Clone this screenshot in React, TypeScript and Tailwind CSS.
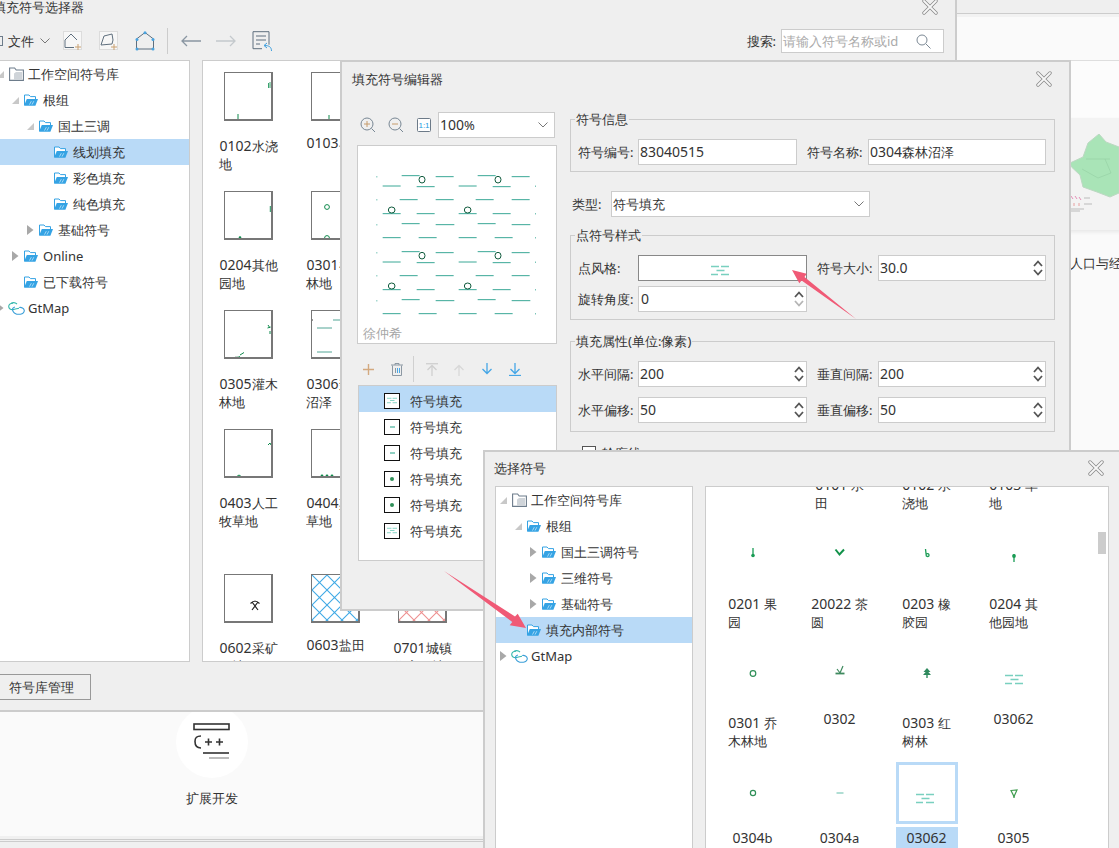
import React from "react";

const SEL = "bg-[#b9daf7]";

function T({ t }: { t: string }) {
  return (
    <>
      {t.split(/(\d+)/).map((p, i) =>
        /^\d+$/.test(p) ? (
          <span key={i} className="text-[14px]">{p}</span>
        ) : (
          <React.Fragment key={i}>{p}</React.Fragment>
        )
      )}
    </>
  );
}

function Tri({ open }: { open?: boolean }) {
  return open ? (
    <svg width="7" height="7" viewBox="0 0 7 7"><path d="M7 0v7H0z" fill="#c8c8c8" /></svg>
  ) : (
    <svg width="7" height="10" viewBox="0 0 7 10"><path d="M0 0l6.5 5L0 10z" fill="#a8a8a8" /></svg>
  );
}

function FolderIcon() {
  return (
    <svg width="14" height="12" viewBox="0 0 14 12" fill="none">
      <path d="M.5 11V1h4.5l1.5 1.6h5v2.4" fill="#fff" stroke="#35a3e4" />
      <path d="M0 11.8 2.8 5H14l-2.6 6.8z" fill="#35a3e4" />
      <path d="M5.5 10.6l1.8-3.4M8 10.6l1.8-3.4" stroke="#a3d8f6" strokeWidth="1" />
    </svg>
  );
}

function LibIcon() {
  return (
    <svg width="15" height="14" viewBox="0 0 15 14" fill="none">
      <path d="M.6 13.4V1h5l1.6 2h7.2v10.4z" fill="#fff" stroke="#6d7c8b" strokeWidth="1.1" />
      <path d="M5 13V6.6l2-1.6h6v8z" fill="#cfd4d9" />
    </svg>
  );
}

function GtIcon() {
  return (
    <svg width="17" height="13" viewBox="0 0 17 13" fill="none">
      <path d="M5 1.2C2.4 1 .6 2.6.7 4.6c.1 2 2 3.2 4.3 3 2.4-.2 4.4-1.2 6-1.3" stroke="#35b8ac" strokeWidth="1.1" />
      <path d="M7 5C4.6 5.4 4 7.400 5 9.200c1.200 2.400 4.300 3.400 7.400 3 2.400-.4 4.200-2 3.800-4-.4-2-2.600-3.200-5-2.700" stroke="#3b9fd8" strokeWidth="1.1" />
      <path d="M3.200 1.300C5 .4 7.400.6 9 2" stroke="#35b8ac" strokeWidth="1.100" />
    </svg>
  );
}

type Row = { level: number; arrow?: "open" | "closed"; icon: "lib" | "folder" | "gt"; text: string; selected?: boolean };

function Tree({ rows, base }: { rows: Row[]; base: number }) {
  return (
    <div className="flex flex-col">
      {rows.map((r, i) => (
        <div key={i} className={`h-[26px] ${r.selected ? SEL : ""}`}>
          <div className="flex items-center h-[26px]" style={{ marginLeft: base + r.level * 15 }}>
            <span className="w-[12px] flex items-center">{r.arrow ? <Tri open={r.arrow === "open"} /> : null}</span>
            <span className="w-[19px] flex items-center">
              {r.icon === "lib" ? <LibIcon /> : r.icon === "folder" ? <FolderIcon /> : <span className="-ml-[1px] flex"><GtIcon /></span>}
            </span>
            <span className="whitespace-nowrap">{r.text}</span>
          </div>
        </div>
      ))}
    </div>
  );
}

function CloseX() {
  return (
    <svg width="16" height="16" viewBox="0 0 16 16" fill="none">
      <path d="M2 2l12 12M14 2 2 14" stroke="#8a8a8a" strokeWidth="3.4" strokeLinecap="round" />
      <path d="M2 2l12 12M14 2 2 14" stroke="#f7f7f7" strokeWidth="1.800" strokeLinecap="round" />
    </svg>
  );
}

function Chev({ color = "#777" }: { color?: string }) {
  return (
    <svg width="10" height="6" viewBox="0 0 10 6" fill="none">
      <path d="M.5.5 5 5 9.500.5" stroke={color} strokeWidth="1" />
    </svg>
  );
}

function Spin({ lowerLight }: { lowerLight?: boolean }) {
  return (
    <span className="flex flex-col gap-[2px] -mr-[3px]">
      <svg width="10" height="7" viewBox="0 0 10 7" fill="none"><path d="M1 6 5 1.500 9 6" stroke="#555" strokeWidth="1.800" /></svg>
      <svg width="10" height="7" viewBox="0 0 10 7" fill="none"><path d="M1 1l4 4.500L9 1" stroke={lowerLight ? "#b5b5b5" : "#555"} strokeWidth="1.800" /></svg>
    </span>
  );
}

function Field({ w, children }: { w: string; children?: React.ReactNode }) {
  return (
    <div className={`${w} h-[26px] bg-white border border-[#ccc] flex items-center pl-[1px] pr-[5px] justify-between`}>
      {children}
    </div>
  );
}

const DASH_PATH = "M0 1.500h8M10 1.500h8M5.500 5.500h8M0 9.500h7M10 9.500h8";

function Dash({ w = 18, h = 11 }: { w?: number; h?: number }) {
  return (
    <svg width={w} height={h} viewBox="0 0 18 11" fill="none" stroke="#79d0bf" strokeWidth="1.600">
      <path d={DASH_PATH} />
    </svg>
  );
}

function Label({ w, children }: { w: string; children: React.ReactNode }) {
  return <span className={`${w} shrink-0 whitespace-nowrap`}>{children}</span>;
}

/* ---------- selector grid ---------- */
const G = "#0f8a4c";
const Box = ({ children }: { children?: React.ReactNode }) => (
  <div className="w-[49px] h-[49px] bg-white border border-[#777] border-r-2 border-b-2 overflow-hidden">
    <svg width="47" height="47" viewBox="0 0 47 47" fill="none" className="block">{children}</svg>
  </div>
);

const selectorCells: { lines: string[]; sym: React.ReactNode }[] = [
  { lines: ["0102水浇", "地"], sym: <g stroke={G}><path d="M45 9v6M43.500 10v5" stroke="#3aa36f" /><path d="M45 12h2" stroke="#86c9a8" /><path d="M9 46.500h8" /><path d="M13 41v5" /></g> },
  { lines: ["0103旱地"], sym: <g stroke={G}><path d="M14 46.500h6M17 42v4" /></g> },
  { lines: [""], sym: null },
  { lines: ["0204其他", "园地"], sym: <g><path d="M45.500 14v6" stroke="#4aa77c" strokeWidth="1.500" /><circle cx="15" cy="45.500" r="1.300" fill={G} /></g> },
  { lines: ["0301乔木", "林地"], sym: <g stroke={G}><circle cx="15" cy="15" r="2.400" /><circle cx="15" cy="46" r="2.400" /></g> },
  { lines: [""], sym: null },
  { lines: ["0305灌木", "林地"], sym: <g stroke={G}><path d="M43 14l2 3M42.500 17l3-1M45 20v3" /><path d="M11 47l4-1.500M15 44l4-2.500" /><path d="M10 46.500h3" strokeWidth="1.500" stroke="#1d5c3c" /></g> },
  { lines: ["0306森林", "沼泽"], sym: <g stroke="#53a596"><path d="M21 9h9M5 17h15M5 41h15M21 47h10" /><path d="M0 9h1" stroke="#333" /></g> },
  { lines: [""], sym: null },
  { lines: ["0403人工", "牧草地"], sym: <g stroke={G}><path d="M43 15l2-2 1 2" /><path d="M11 47l3-2 3 2" /></g> },
  { lines: ["0404其他", "草地"], sym: <g fill={G}><circle cx="10" cy="46" r="1.400" /><circle cx="15" cy="46" r="1.400" /><circle cx="20" cy="46" r="1.400" /></g> },
  { lines: [""], sym: null },
  {
    lines: ["0602采矿", "用地"],
    sym: (
      <g stroke="#222" strokeWidth="1.200">
        <path d="M27 27l6 8M33 27l-6 8" />
        <path d="M25.500 28.500c2-2 3.500-2.500 5-2.500M34.500 28.500c-2-2-3.500-2.500-5-2.500" />
      </g>
    ),
  },
  {
    lines: ["0603盐田"],
    sym: (
      <g>
        <defs>
          <pattern id="lat-blue" width="15" height="15" patternUnits="userSpaceOnUse">
            <path d="M0 0l15 15M15 0 0 15" stroke="#3fa9e5" strokeWidth="1.100" />
          </pattern>
        </defs>
        <rect width="47" height="47" fill="url(#lat-blue)" />
      </g>
    ),
  },
  {
    lines: ["0701城镇", "住宅用地"],
    sym: (
      <g>
        <defs>
          <pattern id="lat-red" width="15" height="15" patternUnits="userSpaceOnUse">
            <path d="M0 0l15 15M15 0 0 15" stroke="#ee9090" strokeWidth="1.100" />
          </pattern>
        </defs>
        <rect width="47" height="47" fill="url(#lat-red)" />
      </g>
    ),
  },
];

/* ---------- dialog grid ---------- */
const SG = "#1a9c55";
const S = ({ children }: { children: React.ReactNode }) => (
  <svg width="62" height="62" viewBox="0 0 62 62" fill="none" className="block">{children}</svg>
);
const dashSym = (
  <g transform="translate(20 31)" stroke="#79d0bf" strokeWidth="1.600"><path d={DASH_PATH} /></g>
);
type DCell = { lines: string[]; sym?: React.ReactNode; selected?: boolean };
const dialogCells: DCell[] = [
  { lines: [""] },
  { lines: ["0101 水", "田"] },
  { lines: ["0102 水", "浇地"] },
  { lines: ["0103 旱", "地"] },
  { lines: ["0201 果", "园"], sym: <g><path d="M31 24v9" stroke={SG} strokeWidth="1.300" /><circle cx="31" cy="31.500" r="1.800" fill={SG} /></g> },
  { lines: ["20022 茶", "圆"], sym: <path d="M26.500 25.500l4 5 4.500-5" stroke="#12924a" strokeWidth="2" /> },
  { lines: ["0203 橡", "胶园"], sym: <path d="M29.500 25l.8 7c1.500 1 3 .5 2.700-1.200-.3-1.500-1.800-1.500-2.900-.8" stroke={SG} strokeWidth="1.300" /> },
  { lines: ["0204 其", "他园地"], sym: <g><path d="M31 30v8" stroke={SG} strokeWidth="1.300" /><circle cx="31" cy="32" r="1.900" fill={SG} /></g> },
  { lines: ["0301 乔", "木林地"], sym: <circle cx="31" cy="30.500" r="2.800" stroke="#2f8f58" strokeWidth="1.200" /> },
  { lines: ["0302"], sym: <g stroke="#3f8a5f"><path d="M31 30l3-7M31 30l-3-4" strokeWidth="1.200" /><path d="M26.500 30.500h9" strokeWidth="1.800" /></g> },
  { lines: ["0303 红", "树林"], sym: <g fill="#2f8a5e"><path d="M31 25l3.500 4h-7zM31 27.500l4 4.500h-8z" /><path d="M30.300 31h1.400v4h-1.400z" /></g> },
  { lines: ["03062"], sym: <g transform="translate(2 0)">{dashSym}</g> },
  { lines: ["0304b"], sym: <circle cx="31" cy="31" r="2.600" stroke="#2f8f58" strokeWidth="1.200" /> },
  { lines: ["0304a"], sym: <path d="M27.500 31h7" stroke="#8fd0c2" strokeWidth="1.400" /> },
  { lines: ["03062"], sym: dashSym, selected: true },
  { lines: ["0305"], sym: <g stroke="#3f9c4f" strokeWidth="1.200"><path d="M28 28.500l6-.5-3 6.500z" /><path d="M31 34v2" /></g> },
];

/* ---------- tool icons ---------- */
const HousePlus = () => (
  <svg width="20" height="20" viewBox="0 0 20 20" fill="none">
    <rect x=".5" y=".5" width="18" height="18" fill="#f7f7f7" stroke="#dcdcdc" />
    <path d="M2 16.500V9l6-6 6 6" stroke="#5f6f7e" />
    <path d="M2 16.500h9" stroke="#5f6f7e" />
    <path d="M15 13v6M12 16h6" stroke="#c9a070" />
  </svg>
);
const PolyPlus = () => (
  <svg width="20" height="20" viewBox="0 0 20 20" fill="none">
    <rect x=".5" y=".5" width="18" height="18" fill="#f7f7f7" stroke="#dcdcdc" />
    <path d="M2 14l3-9 8-2 1 6-1 4z" stroke="#5f6f7e" />
    <path d="M15 13v6M12 16h6" stroke="#c9a070" />
  </svg>
);
const HouseDots = () => (
  <svg width="20" height="20" viewBox="0 0 20 20" fill="none">
    <path d="M1.500 8 10 1.500 18.500 8v10h-17z" stroke="#5f6f7e" />
    <g fill="#4aa3df">
      <circle cx="10" cy="1.800" r="1.500" /><circle cx="18" cy="8.500" r="1.500" /><circle cx="2" cy="8.500" r="1.500" />
      <circle cx="2" cy="18" r="1.500" /><circle cx="18" cy="18" r="1.500" />
    </g>
  </svg>
);
const ArrowH = ({ right, color }: { right?: boolean; color: string }) => (
  <svg width="20" height="12" viewBox="0 0 20 12" fill="none" stroke={color} strokeWidth="1.300">
    {right ? <path d="M0 6h19M14 1l5 5-5 5" /> : <path d="M20 6H1M6 1 1 6l5 5" />}
  </svg>
);
const ListBack = () => (
  <svg width="20" height="21" viewBox="0 0 20 21" fill="none">
    <path d="M1 .7h16v13M1 .7v17h9" stroke="#5f6f7e" />
    <path d="M4 5h10M4 9h10M4 13h4" stroke="#5f6f7e" />
    <path d="M19.500 20c0-4-2.500-5.500-7-5.500M15 12l-3 2.500 3 2.500" stroke="#3d9ede" />
  </svg>
);
const Zoomer = ({ kind }: { kind: "in" | "out" }) => (
  <svg width="16" height="16" viewBox="0 0 16 16" fill="none">
    <circle cx="7" cy="7" r="6" stroke="#788794" />
    <path d="M11.500 11.500 15 15" stroke="#788794" />
    <path d="M4 7h6" stroke="#c69c6d" />
    {kind === "in" && <path d="M7 4v6" stroke="#c69c6d" />}
  </svg>
);
const OneOne = () => (
  <svg width="14" height="14" viewBox="0 0 14 14">
    <rect x=".5" y=".5" width="13" height="13" rx="1" fill="#fff" stroke="#6c7a88" />
    <text x="7" y="10" fontSize="8" fill="#1c9ce0" textAnchor="middle" fontFamily="Liberation Sans, sans-serif">1:1</text>
  </svg>
);
const Plus = () => (
  <svg width="11" height="11" viewBox="0 0 11 11"><path d="M5.500 0v11M0 5.500h11" stroke="#d3a97f" strokeWidth="1.400" /></svg>
);
const Trash = () => (
  <svg width="12" height="13" viewBox="0 0 12 13" fill="none">
    <path d="M0 2h12M4 2V.5h4V2" stroke="#8c98a3" />
    <path d="M1.500 2.500v10h9v-10" stroke="#8c98a3" />
    <path d="M4.500 5v5" stroke="#8c98a3" /><path d="M6.500 5v5" stroke="#4aa8e6" /><path d="M8.500 5v5" stroke="#4aa8e6" />
  </svg>
);
const Move = ({ top, down, color }: { top?: boolean; down?: boolean; color: string }) => (
  <svg width="12" height="13" viewBox="0 0 12 13" fill="none" stroke={color} strokeWidth="1.300">
    {down ? (
      <g><path d="M6 0v10M1.500 6 6 10.500 10.500 6" />{top && <path d="M0 12.500h12" />}</g>
    ) : (
      <g><path d="M6 13V3M1.500 7 6 2.500 10.500 7" />{top && <path d="M0 .7h12" />}</g>
    )}
  </svg>
);

const swatches = ["dash", "bar", "bar", "dot", "dot", "dash"];

const previewRows = (dy: number) => (
  <g key={dy} transform={`translate(0 ${dy})`}>
    <g stroke="#3aa896" strokeWidth="3">
      <path d="M129 379h54M357 379h54M186 348h54M414 348h54M288 351h54M516 351h54M231 381h54M459 381h54" />
      <path d="M180 420h54M408 420h54M288 420h54M516 420h54" />
      <path d="M129 462h54M231 462h54M357 462h54M459 462h54" />
      <path d="M186 492h54M414 492h54M288 495h56M516 495h56" />
      <path d="M129 534h54M237 534h54M357 534h54M465 534h54" />
    </g>
    <g fill="#3aa896">
      <rect x="110" y="350" width="3" height="3" />
      <rect x="586" y="378" width="3" height="3" />
      <rect x="110" y="419" width="3" height="3" />
      <rect x="586" y="461" width="3" height="3" />
      <rect x="110" y="494" width="3" height="3" />
      <rect x="586" y="533" width="3" height="3" />
    </g>
    <g stroke="#0f5a3c" strokeWidth="3" fill="#fff">
      <ellipse cx="247" cy="360" rx="9" ry="10" />
      <ellipse cx="475" cy="360" rx="9" ry="10" />
      <ellipse cx="156" cy="451" rx="10" ry="9" />
      <ellipse cx="384" cy="451" rx="10" ry="9" />
    </g>
  </g>
);

export default function App() {
  return (
    <div className="relative w-[1119px] h-[848px] overflow-hidden bg-[#fafafa] text-[13px] leading-[18px] text-[#333] [font-family:'Noto_Sans','Noto_Sans_CJK_SC',sans-serif]">
      {/* background application */}
      <div className="flex h-[712px]">
        {/* selector window */}
        <div className="w-[957px] shrink-0 bg-[#efefef] border-r-2 border-b-2 border-[#ccc] flex flex-col">
          <div className="h-[14px] flex items-center justify-between pr-[17px]">
            <span className="-ml-[7px]">填充符号选择器</span>
            <CloseX />
          </div>
          <div className="mt-[13px] h-[28px] flex items-center">
            <span className="w-[3px] h-[10px] border border-[#6d7c8b] border-l-0" />
            <span className="ml-[5px]">文件</span>
            <span className="ml-[6px] flex"><Chev /></span>
            <span className="ml-[13px] flex"><HousePlus /></span>
            <span className="ml-[16px] flex"><PolyPlus /></span>
            <span className="ml-[16px] flex"><HouseDots /></span>
            <span className="ml-[12px] w-px h-[26px] bg-[#ccc]" />
            <span className="ml-[13px] flex"><ArrowH color="#8a96a2" /></span>
            <span className="ml-[15px] flex"><ArrowH right color="#c4c9cd" /></span>
            <span className="ml-[16px] flex"><ListBack /></span>
            <span className="ml-auto">搜索:</span>
            <div className="ml-[5px] mr-[11px] w-[163px] h-[24px] bg-white border border-[#ccc] flex items-center justify-between pl-[1px] pr-[12px] text-[#aaa]">
              <span className="whitespace-nowrap">请输入符号名称或id</span>
              <svg width="15" height="15" viewBox="0 0 15 15" fill="none" stroke="#7b8894"><circle cx="6" cy="6" r="5" /><path d="M10 10l4.500 4.500" /></svg>
            </div>
          </div>
          <div className="mt-[5px] flex h-[602px]">
            <div className="w-[192px] -ml-[2px] bg-white border border-[#ccc] overflow-hidden">
              <Tree
                base={-2}
                rows={[
                  { level: 0, arrow: "open", icon: "lib", text: "工作空间符号库" },
                  { level: 1, arrow: "open", icon: "folder", text: "根组" },
                  { level: 2, arrow: "open", icon: "folder", text: "国土三调" },
                  { level: 3, icon: "folder", text: "线划填充", selected: true },
                  { level: 3, icon: "folder", text: "彩色填充" },
                  { level: 3, icon: "folder", text: "纯色填充" },
                  { level: 2, arrow: "closed", icon: "folder", text: "基础符号" },
                  { level: 1, arrow: "closed", icon: "folder", text: "Online" },
                  { level: 1, icon: "folder", text: "已下载符号" },
                  { level: 0, arrow: "closed", icon: "gt", text: "GtMap" },
                ]}
              />
            </div>
            <div className="ml-[12px] w-[741px] bg-white border border-[#ccc] overflow-hidden pt-[6px] pl-[2px]">
              <div className="grid grid-cols-[87px_87px_87px] grid-rows-[119px_119px_119px_145px_119px]">
                {selectorCells.map((c, i) =>
                  c.lines[0] === "" ? (
                    <div key={i} />
                  ) : (
                    <div key={i} className="flex flex-col items-center pt-[5px]">
                      <Box>{c.sym}</Box>
                      <div className={`whitespace-nowrap text-left ${c.lines.length > 1 ? "mt-[16px]" : "mt-[13px]"}`}>
                        {c.lines.map((l, j) => (
                          <div key={j}><T t={l} /></div>
                        ))}
                      </div>
                    </div>
                  )
                )}
              </div>
            </div>
          </div>
          <div className="mt-[12px] -ml-[2px] w-[93px] h-[26px] border border-[#999] flex items-center pl-[10px]">符号库管理</div>
        </div>

        {/* right part of the page behind */}
        <div className="flex-1 flex flex-col">
          <div className="h-[14px] bg-[#efefef] border-b border-[#ccc]" />
          <div className="h-[46px] bg-[#fafafa] border-t-[3px] border-[#f2f2f2]" />
          <div className="h-[58px] bg-[#fcfcfc] border-t border-[#dedede]" />
          <div className="h-[112px] bg-[#f3f3f3] shadow-[0_2px_4px_rgba(0,0,0,0.08)] pl-[113px] pt-[16px]">
            <svg width="49" height="80" viewBox="0 0 49 80" className="block">
              <path d="M0 29l13-6 5-14 11-9 7 8 13 5v46l-9 4-13-5-14-5-3-12-8.500-8z" fill="#a9e4b7" stroke="#bcd8c2" />
              <path d="M16 25h24M35 25l6 14-13 5-16-9" stroke="#93cfa3" strokeWidth=".6" fill="none" />
              <g stroke="#e58fb8"><path d="M1 62l2 3M5 62l2 3M9 63l2 3" /></g>
              <g stroke="#e8a0a0"><path d="M4 69v3M9 69v3" /></g>
              <g stroke="#bbb"><path d="M14 64h6M14 70h8M0 75h14M0 77h10" /></g>
            </svg>
          </div>
          <div className="mt-[24px] pl-[113px] whitespace-nowrap">人口与经</div>
        </div>
      </div>

      {/* bottom strip */}
      <div className="h-[124px] bg-[#fafafa] overflow-hidden">
        <div className="w-[424px] flex flex-col items-center">
          <div className="-mt-[6px] w-[72px] h-[72px] rounded-full bg-white flex items-center justify-center">
            <svg width="38" height="38" viewBox="0 0 38 38" fill="none">
              <rect x="1" y="1" width="35" height="5.500" stroke="#333" strokeWidth="1.600" />
              <path d="M8 13C3 13 2 15 2 18.500 2 22 3.500 25 8 25" stroke="#333" strokeWidth="1.600" />
              <path d="M12 19h7M15.500 15.500v7M23 19h7M26.500 15.500v7" stroke="#333" strokeWidth="1.600" />
              <path d="M10 30h26" stroke="#333" strokeWidth="1.600" />
              <path d="M16 35h20" stroke="#aaa" strokeWidth="1.600" />
            </svg>
          </div>
          <div className="mt-[11px]">扩展开发</div>
        </div>
      </div>
      <div className="h-[12px] bg-[#f0f0f0] pt-[3px]">
        <div className="h-[3px] border-y border-[#ccc]" />
      </div>

      {/* editor window */}
      <div className="absolute left-[340px] top-[60px] w-[731px] h-[551px] bg-[#efefef] border-2 border-[#ccc]">
        <div className="h-[34px] flex items-center justify-between pl-[10px] pr-[17px]">
          <span>填充符号编辑器</span>
          <CloseX />
        </div>
        <div className="flex">
          <div className="ml-[15px] w-[200px] pt-[16px]">
            <div className="flex items-center h-[26px]">
              <span className="ml-[3px] flex"><Zoomer kind="in" /></span>
              <span className="ml-[12px] flex"><Zoomer kind="out" /></span>
              <span className="ml-[13px] flex"><OneOne /></span>
              <div className="ml-[7px] w-[117px] h-[26px] bg-white border border-[#ccc] flex items-center justify-between pl-[1px] pr-[6px]">
                <span><T t="100%" /></span>
                <Chev />
              </div>
            </div>
            <div className="relative mt-[7px] w-[200px] h-[199px] bg-white border border-[#ccc]">
              <svg width="198" height="197" viewBox="55 259 594 591" className="block">
                {previewRows(0)}
                {previewRows(228)}
              </svg>
              <span className="absolute left-[5px] bottom-[1px] text-[#a6a6a6]">徐仲希</span>
            </div>
            <div className="mt-[11px] h-[28px] flex items-center">
              <span className="ml-[6px] flex"><Plus /></span>
              <span className="ml-[17px] flex"><Trash /></span>
              <span className="ml-[10px] w-px h-[26px] bg-[#d0d0d0]" />
              <span className="ml-[12px] flex"><Move top color="#cfcfcf" /></span>
              <span className="ml-[15px] flex"><Move color="#d8d8d8" /></span>
              <span className="ml-[16px] flex"><Move down color="#45a6e6" /></span>
              <span className="ml-[16px] flex"><Move down top color="#45a6e6" /></span>
            </div>
            <div className="mt-[2px] ml-[1px] w-[199px] h-[176px] bg-white border border-[#ccc] flex flex-col">
              {swatches.map((s, i) => (
                <div key={i} className={`h-[26px] flex items-center pl-[25px] pt-[3px] ${i === 0 ? SEL : ""}`}>
                  <span className="w-[16px] h-[16px] bg-white border-[1.500px] border-[#111] flex items-center justify-center">
                    {s === "dash" && <Dash w={10} h={7} />}
                    {s === "bar" && <span className="w-[5px] h-[2px] bg-[#8fd0c2]" />}
                    {s === "dot" && <span className="w-[4px] h-[4px] rounded-full bg-[#2f8f58]" />}
                  </span>
                  <span className="ml-[10px]">符号填充</span>
                </div>
              ))}
            </div>
          </div>

          <div className="ml-[13px] w-[485px] pt-[14px]">
            <fieldset className="border border-[#ccc] h-[62px] pl-[7px]">
              <legend className="-ml-[3px] px-[1px]">符号信息</legend>
              <div className="mt-[11px] flex items-center">
                <Label w="w-[60px]">符号编号:</Label>
                <Field w="w-[159px]"><span><T t="83040515" /></span></Field>
                <Label w="w-[61px] ml-[10px]">符号名称:</Label>
                <Field w="w-[178px]"><span><T t="0304森林沼泽" /></span></Field>
              </div>
            </fieldset>

            <div className="mt-[19px] flex items-center pl-[2px]">
              <Label w="w-[39px]">类型:</Label>
              <Field w="w-[259px]">
                <span>符号填充</span>
                <Chev />
              </Field>
            </div>

            <fieldset className="mt-[9px] border border-[#ccc] h-[94px] pl-[7px]">
              <legend className="-ml-[3px] px-[1px]">点符号样式</legend>
              <div className="mt-[11px] flex items-center">
                <Label w="w-[60px]">点风格:</Label>
                <div className="w-[169px] h-[26px] bg-white border border-[#888] flex justify-center pt-[9px] pr-[6px]">
                  <Dash />
                </div>
                <Label w="w-[61px] ml-[10px]">符号大小:</Label>
                <Field w="w-[168px]">
                  <span><T t="30" />.<T t="0" /></span>
                  <Spin />
                </Field>
              </div>
              <div className="mt-[5px] flex items-center">
                <Label w="w-[60px]">旋转角度:</Label>
                <Field w="w-[169px]">
                  <span className="pl-[1px]"><T t="0" /></span>
                  <Spin lowerLight />
                </Field>
              </div>
            </fieldset>

            <fieldset className="mt-[12px] border border-[#ccc] h-[100px] pl-[7px]">
              <legend className="-ml-[3px] px-[1px]">填充属性(单位:像素)</legend>
              <div className="mt-[11px] flex items-center">
                <Label w="w-[60px]">水平间隔:</Label>
                <Field w="w-[169px]">
                  <span><T t="200" /></span>
                  <Spin />
                </Field>
                <Label w="w-[61px] ml-[10px]">垂直间隔:</Label>
                <Field w="w-[168px]">
                  <span><T t="200" /></span>
                  <Spin />
                </Field>
              </div>
              <div className="mt-[10px] flex items-center">
                <Label w="w-[60px]">水平偏移:</Label>
                <Field w="w-[169px]">
                  <span><T t="50" /></span>
                  <Spin />
                </Field>
                <Label w="w-[61px] ml-[10px]">垂直偏移:</Label>
                <Field w="w-[168px]">
                  <span><T t="50" /></span>
                  <Spin />
                </Field>
              </div>
            </fieldset>

            <div className="mt-[12px] pl-[12px] flex items-center">
              <span className="w-[14px] h-[14px] bg-white border border-[#555]" />
              <span className="ml-[6px]">轮廓线</span>
            </div>
          </div>
        </div>
      </div>

      {/* select-symbol dialog */}
      <div className="absolute left-[483px] top-[450px] w-[640px] h-[402px] bg-[#efefef] border-2 border-[#ccc]">
        <div className="w-[634px] h-[32px] mb-[2px] flex items-center justify-between pl-[9px] pr-[15px]">
          <span>选择符号</span>
          <CloseX />
        </div>
        <div className="flex h-[370px] pl-[10px]">
          <div className="w-[198px] bg-white border border-[#ccc] overflow-hidden">
            <Tree
              base={4}
              rows={[
                { level: 0, arrow: "open", icon: "lib", text: "工作空间符号库" },
                { level: 1, arrow: "open", icon: "folder", text: "根组" },
                { level: 2, arrow: "closed", icon: "folder", text: "国土三调符号" },
                { level: 2, arrow: "closed", icon: "folder", text: "三维符号" },
                { level: 2, arrow: "closed", icon: "folder", text: "基础符号" },
                { level: 1, icon: "folder", text: "填充内部符号", selected: true },
                { level: 0, arrow: "closed", icon: "gt", text: "GtMap" },
              ]}
            />
          </div>
          <div className="relative ml-[12px] w-[404px] bg-white border border-[#ccc] overflow-hidden">
            <div className="-mt-[87px] ml-[3px] grid grid-cols-[87px_87px_87px_87px] auto-rows-[119px]">
              {dialogCells.map((c, i) => (
                <div key={i} className="flex flex-col items-center">
                  <div className={`mt-[5px] w-[62px] h-[62px] ${c.selected ? "border-[3px] border-[#b9daf7]" : ""} flex items-center justify-center overflow-hidden`}>
                    <span className={c.selected ? "-m-[3px] flex" : "flex"}>
                      {c.sym ? <S>{c.sym}</S> : null}
                    </span>
                  </div>
                  {c.selected ? (
                    <div className={`mt-[3px] w-[62px] h-[22px] leading-[22px] text-center ${SEL}`}><T t={c.lines[0]} /></div>
                  ) : (
                    <div className={`whitespace-nowrap text-left ${c.lines.length > 1 ? "mt-[9px]" : "mt-[5px]"}`}>
                      {c.lines.map((l, j) => (
                        <div key={j}><T t={l} /></div>
                      ))}
                    </div>
                  )}
                </div>
              ))}
            </div>
            <div className="absolute left-[392px] top-[45px] w-[8px] h-[22px] bg-[#ccc]" />
          </div>
        </div>
      </div>

      {/* red annotation arrows */}
      <svg className="absolute left-0 top-0 pointer-events-none" width="1119" height="848" viewBox="0 0 1119 848">
        <path d="M856 319 804.500 277 806.700 273.800 792 270 799.300 283.200 801.600 280.500z" fill="#f05a76" />
        <path d="M444 571 515 616.500 517.700 613.800 526 628 509.700 625.200 512.300 621.900z" fill="#f05a76" />
      </svg>
    </div>
  );
}
